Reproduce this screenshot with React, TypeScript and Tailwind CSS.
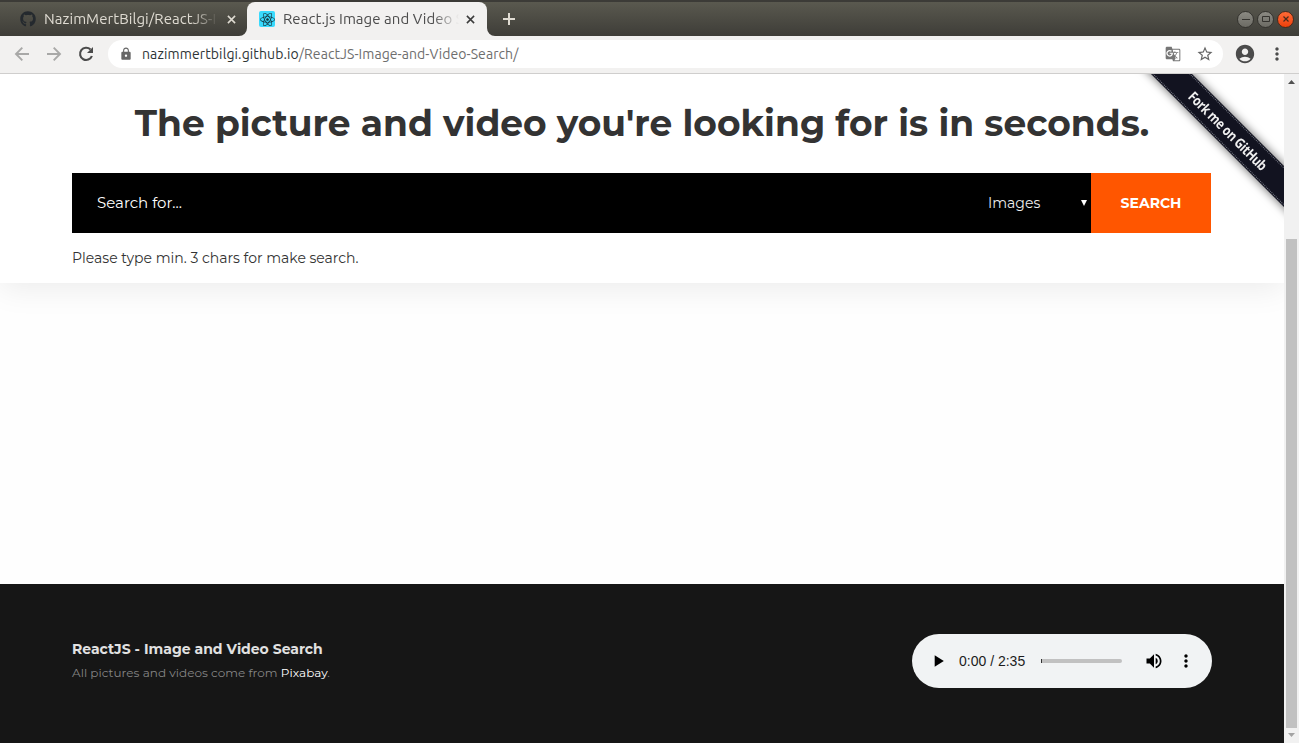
import React from "react";
import { FaGithub, FaReact } from "react-icons/fa";
import {
  MdAccountCircle,
  MdGTranslate,
  MdLock,
  MdMoreVert,
  MdPlayArrow,
  MdStarBorder,
  MdVolumeUp,
} from "react-icons/md";

function Cross({ className }: { className: string }) {
  return (
    <svg viewBox="0 0 10 10" className={className} fill="none" stroke="currentColor" strokeWidth="1.7">
      <path d="M1 1l8 8M9 1l-8 8" />
    </svg>
  );
}

function TabStrip() {
  return (
    <div className="flex h-9 items-end border-t-2 border-[#3c3b37] bg-linear-to-b from-[#5a594f] to-[#3e3d38]">
      <div className="flex h-[34px] w-[247px] items-center pl-5">
        <FaGithub className="size-4 shrink-0 text-[#24292e]" />
        <span className="ml-2 w-[174px] overflow-hidden mask-r-from-85% mask-r-to-100% pb-px whitespace-nowrap text-[15px] leading-[20px] tracking-[0.04px] text-[#dfdbd2]">
          NazimMertBilgi/ReactJS-I
        </span>
        <Cross className="ml-[9px] size-[9px] shrink-0 text-[#dfdbd2]" />
      </div>
      <div className="relative flex h-[34px] w-[240px] items-center rounded-t-lg bg-[#f2f1f0] pl-3">
        <svg viewBox="0 0 8 8" className="absolute bottom-0 -left-2 size-2 fill-[#f2f1f0]">
          <path d="M8 0v8H0a8 8 0 0 0 8-8z" />
        </svg>
        <svg viewBox="0 0 8 8" className="absolute -right-2 bottom-0 size-2 fill-[#f2f1f0]">
          <path d="M0 0v8h8a8 8 0 0 1-8-8z" />
        </svg>
        <span className="flex size-4 shrink-0 items-center justify-center rounded-[2px] bg-[#3adafd]">
          <FaReact className="size-[15px] text-[#17323c]" />
        </span>
        <span className="ml-2 w-[176px] overflow-hidden mask-r-from-85% mask-r-to-100% pb-px whitespace-nowrap text-[15px] leading-[20px] tracking-[0.04px] text-[#4c4c4c]">
          React.js Image and Video S
        </span>
        <Cross className="ml-[7px] size-[9px] shrink-0 text-[#3c3c3c]" />
      </div>
      <div className="flex h-[34px] flex-1 items-center pl-4">
        <svg viewBox="0 0 12 12" className="size-3" stroke="#dfdbd2" strokeWidth="2">
          <path d="M6 0v12M0 6h12" />
        </svg>
      </div>
      <div className="flex h-[34px] items-center gap-[3px] pr-[5px]">
        <span className="flex size-[17px] items-center justify-center rounded-full border border-[#34332f] bg-linear-to-b from-[#8b8a83] to-[#6c6b64]">
          <svg viewBox="0 0 10 10" className="size-[10px]" stroke="#34332f" fill="none">
            <path d="M1 5.5h8" />
          </svg>
        </span>
        <span className="flex size-[17px] items-center justify-center rounded-full border border-[#34332f] bg-linear-to-b from-[#8b8a83] to-[#6c6b64]">
          <svg viewBox="0 0 10 10" className="size-[10px]" stroke="#34332f" fill="none">
            <path d="M1.5 2.5h7v5h-7z" />
          </svg>
        </span>
        <span className="flex size-[17px] items-center justify-center rounded-full border border-[#4a2a1c] bg-linear-to-b from-[#ff6a35] to-[#ee3f06]">
          <svg viewBox="0 0 10 10" className="size-[10px]" stroke="#4a2a1c" strokeWidth="1.2" fill="none">
            <path d="M2.500 2.500l5 5M7.500 2.500l-5 5" />
          </svg>
        </span>
      </div>
    </div>
  );
}

function Toolbar() {
  return (
    <div className="flex h-[38px] items-center border-b border-[#cfcecd] bg-[#f2f1f0] pb-px pl-3 text-[#4b4b4b]">
      <svg viewBox="0 0 20 20" className="size-5" fill="none" stroke="#a8a8a7" strokeWidth="1.9">
        <path d="M17 10H4.500M10.300 3.700L4 10l6.300 6.300" />
      </svg>
      <svg viewBox="0 0 20 20" className="ml-3 size-5" fill="none" stroke="#a8a8a7" strokeWidth="1.9">
        <path d="M3 10h12.500M9.700 3.700L16 10l-6.300 6.300" />
      </svg>
      <svg viewBox="0 0 20 20" className="ml-3 size-5" fill="none" stroke="#4b4b4b" strokeWidth="2.100">
        <path d="M14.500 5.600A6.100 6.100 0 1 0 15.900 12" />
        <path d="M17 3v6h-6z" fill="#4b4b4b" stroke="none" />
      </svg>
      <div className="ml-3 flex h-7 w-[1115px] items-center rounded-full bg-white pr-[9px] pl-[11px]">
        <MdLock className="size-[14px] text-[#666]" />
        <span className="ml-[9px] flex-1 whitespace-nowrap text-[14px] leading-5 tracking-[0.07px] text-[#6e6e6e]">
          <span className="tracking-[0.12px] text-[#2e3436]">nazimmertbilgi.github.io</span>
          /ReactJS-Image-and-Video-Search/
        </span>
        <MdGTranslate className="size-4 text-[#757575]" />
        <MdStarBorder className="ml-[15px] size-[18px] text-[#666]" />
      </div>
      <MdAccountCircle className="ml-[11px] size-[22px]" />
      <MdMoreVert className="ml-[11px] size-5" />
    </div>
  );
}

function ForkRibbon() {
  return (
    <div className="absolute top-0 right-0 size-[150px] overflow-hidden">
      <div className="absolute top-[41px] -right-[58px] flex h-[29px] w-[230px] rotate-45 items-center justify-center bg-[#121320] shadow-[0_0_9px_1px_rgba(0,0,0,0.5)]">
        <div className="flex h-[27px] w-full items-center justify-center border-y border-dotted border-[#777a86] text-[14px] font-bold text-[#f0f0f0]">
          <span className="ml-[3px] scale-x-[0.85] font-['Open_Sans',sans-serif] tracking-[-0.5px]">
            Fork me on GitHub
          </span>
        </div>
      </div>
    </div>
  );
}

function SearchSection() {
  return (
    <section className="relative h-[209px] bg-white px-[72px] pt-6 shadow-[0_5px_30px_rgba(0,0,0,0.08)]">
      <h1 className="text-center text-[36px] leading-[50px] font-bold whitespace-nowrap text-[#333]">
        The picture and video you&apos;re looking for is in seconds.
      </h1>
      <form className="mt-[25px] flex h-[60px] w-[1139px] bg-black text-white">
        <div className="flex flex-1 items-center pt-px pl-[25px] text-[15px]">Search for...</div>
        <div className="flex w-[103px] items-center justify-between pr-1 text-[14px] text-[#eee]">
          <span>Images</span>
          <svg viewBox="0 0 6 6" className="mb-px size-[6px] fill-white">
            <path d="M0 0h6L3 6z" />
          </svg>
        </div>
        <button type="button" className="w-[120px] bg-[#ff5600] text-[14px] font-bold">
          SEARCH
        </button>
      </form>
      <p className="mt-[15px] text-[14px] leading-5 text-[#333]">Please type min. 3 chars for make search.</p>
    </section>
  );
}

function AudioPlayer() {
  return (
    <div className="flex h-[54px] w-[300px] items-center rounded-full bg-[#f1f3f4] pl-4 text-black">
      <MdPlayArrow className="size-5" />
      <span className="ml-[11px] w-[82px] font-['Liberation_Sans',sans-serif] text-[14px] text-[#1c1c1c]">0:00 / 2:35</span>
      <div className="h-1 w-[81px] rounded-r-full border-l border-[#333] bg-[#c1c1c1]" />
      <MdVolumeUp className="ml-[22px] size-5" />
      <MdMoreVert className="ml-3 size-5" />
    </div>
  );
}

function Footer() {
  return (
    <footer className="flex h-[159px] items-start justify-between bg-[#161616] pt-[50px] pr-[72px] pl-[72px]">
      <div className="pt-[5px]">
        <h2 className="text-[14px] leading-5 font-bold text-[#e1e1e1]">ReactJS - Image and Video Search</h2>
        <p className="mt-1 text-[12px] leading-5 tracking-[0.03px] text-[#858585]">
          All pictures and videos come from <a className="text-white">Pixabay</a>.
        </p>
      </div>
      <AudioPlayer />
    </footer>
  );
}

function Scrollbar() {
  return (
    <div className="flex w-[15px] flex-col items-center bg-[#f1f1f1]">
      <svg viewBox="0 0 15 15" className="size-[15px] fill-[#505050]">
        <path d="M4 10h7L7.500 6z" />
      </svg>
      <div className="mt-[150px] w-[11px] flex-1 bg-[#c1c1c1]" />
      <svg viewBox="0 0 15 15" className="size-[15px] fill-[#a3a3a3]">
        <path d="M4 5h7L7.500 9z" />
      </svg>
    </div>
  );
}

export default function App() {
  return (
    <div className="flex h-[743px] w-[1299px] flex-col overflow-hidden bg-white font-[Ubuntu,'Noto_Sans',sans-serif]">
      <TabStrip />
      <Toolbar />
      <div className="flex flex-1">
        <main className="relative flex w-[1284px] flex-col justify-between overflow-hidden bg-[#fefefe] font-[Montserrat,Inter,sans-serif]">
          <SearchSection />
          <Footer />
          <ForkRibbon />
        </main>
        <Scrollbar />
      </div>
    </div>
  );
}
